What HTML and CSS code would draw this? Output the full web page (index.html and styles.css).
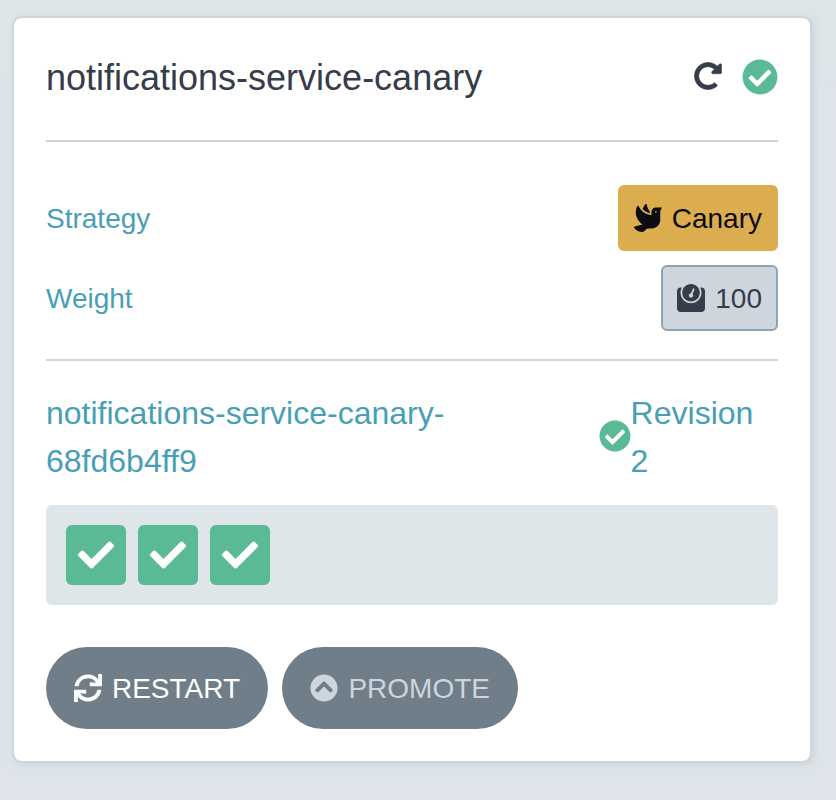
FILE: index.html
```html
<!DOCTYPE html>
<html lang="en">
<head>
<meta charset="utf-8">
<title>Rollout</title>
<link rel="stylesheet" href="styles.css">
</head>
<body>
<svg class="sprite" aria-hidden="true">
  <symbol id="check-circle" viewBox="0 0 512 512"><path d="M504 256c0 136.967-111.033 248-248 248S8 392.967 8 256 119.033 8 256 8s248 111.033 248 248zM227.314 387.314l184-184c6.248-6.248 6.248-16.379 0-22.627l-22.627-22.627c-6.248-6.249-16.379-6.249-22.628 0L216 308.118l-70.059-70.059c-6.248-6.248-16.379-6.248-22.628 0l-22.627 22.627c-6.248 6.248-6.248 16.379 0 22.627l104 104c6.249 6.249 16.379 6.249 22.628.001z"/></symbol>
  <symbol id="check" viewBox="0 0 512 512"><path d="M173.898 439.404l-166.4-166.4c-9.997-9.997-9.997-26.206 0-36.204l36.203-36.204c9.997-9.998 26.207-9.998 36.204 0L192 312.69 432.095 72.596c9.997-9.997 26.207-9.997 36.204 0l36.203 36.204c9.997 9.997 9.997 26.206 0 36.204l-294.4 294.401c-9.998 9.997-26.207 9.997-36.204-.001z"/></symbol>
</svg>
<article class="card">
  <header class="header">
    <h1 class="title">notifications-service-canary</h1>
    <svg class="icon redo" viewBox="0 0 512 512"><path d="M256.455 8c66.269.119 126.437 26.233 170.859 68.685l35.715-35.715C478.149 25.851 504 36.559 504 57.941V192c0 13.255-10.745 24-24 24H345.941c-21.382 0-32.09-25.851-16.971-40.971l41.75-41.75c-30.864-28.899-70.801-44.907-113.23-45.273-92.398-.798-170.283 73.977-169.484 169.442C88.764 348.009 162.184 424 256 424c41.127 0 79.997-14.678 110.629-41.556 4.743-4.161 11.906-3.908 16.368.553l39.662 39.662c4.872 4.872 4.631 12.815-.482 17.433C378.202 479.813 319.926 504 256 504 119.034 504 8.001 392.967 8 256.002 7.999 119.193 119.646 7.755 256.455 8z"/></svg>
    <svg class="status status-large"><use href="#check-circle"/></svg>
  </header>
  <section class="facts">
    <div class="fact">
      <span class="label">Strategy</span>
      <span class="tag tag-canary">
        <svg class="icon" viewBox="0 0 512 512"><path d="M288 167.2v-28.1c-28.2-36.3-47.1-79.3-54.1-125.2-2.1-13.5-19-18.8-27.8-8.3-21.1 24.9-37.7 54.1-48.9 86.5 34.2 38.3 80 64.6 130.8 75.1zM400 64c-44.2 0-80 35.9-80 80.1v59.4C215.6 197.3 127 133 87 41.8c-5.5-12.5-23.2-13.2-29-.9C41.4 76 32 115.2 32 156.6c0 70.8 34.1 136.9 85.1 185.9 13.2 12.7 26.1 23.2 38.9 32.8l-143.9 36C1.4 414-3.4 426.4 2.6 435.7 20 462.6 63 508.2 155.8 512c8 .3 16-2.6 22.1-7.9l65.2-56.1H320c88.4 0 160-71.5 160-159.9V128l32-64H400zm0 96.1c-8.8 0-16-7.2-16-16s7.2-16 16-16 16 7.2 16 16-7.2 16-16 16z"/></svg>
        <span class="text">Canary</span>
      </span>
    </div>
    <div class="fact">
      <span class="label">Weight</span>
      <span class="tag tag-weight">
        <svg class="icon" viewBox="0 0 512 512"><path d="M448 64h-25.98C438.44 92.33 448 125.01 448 160c0 105.87-86.13 192-192 192S64 265.87 64 160c0-34.99 9.56-67.67 25.98-96H64C28.71 64 0 92.71 0 128v320c0 35.29 28.71 64 64 64h384c35.29 0 64-28.71 64-64V128c0-35.29-28.71-64-64-64zM256 320c88.37 0 160-71.63 160-160S344.37 0 256 0 96 71.63 96 160s71.63 160 160 160zm-.3-151.94l33.58-78.36c3.5-8.17 12.94-11.92 21.03-8.41 8.12 3.48 11.88 12.89 8.41 21l-33.67 78.55C291.73 188 296 197.45 296 208c0 22.09-17.91 40-40 40s-40-17.91-40-40c0-21.98 17.76-39.77 39.7-39.94z"/></svg>
        <span class="text">100</span>
      </span>
    </div>
  </section>
  <section class="replicaset">
    <span class="rs-name">notifications-service-canary-<br>68fd6b4ff9</span>
    <svg class="status status-small"><use href="#check-circle"/></svg>
    <span class="revision">Revision<br>2</span>
  </section>
  <div class="pods">
    <span class="pod"><svg class="pod-icon"><use href="#check"/></svg></span>
    <span class="pod"><svg class="pod-icon"><use href="#check"/></svg></span>
    <span class="pod"><svg class="pod-icon"><use href="#check"/></svg></span>
  </div>
  <footer class="actions">
    <button class="button restart">
      <svg class="icon" viewBox="0 0 512 512"><path d="M440.65 12.57l4 82.77A247.16 247.16 0 0 0 255.83 8C134.73 8 33.91 94.92 12.29 209.82A12 12 0 0 0 24.09 224h49.05a12 12 0 0 0 11.67-9.26 175.91 175.91 0 0 1 317-56.94l-101.46-4.86a12 12 0 0 0-12.57 12v47.41a12 12 0 0 0 12 12H500a12 12 0 0 0 12-12V12a12 12 0 0 0-12-12h-47.37a12 12 0 0 0-11.98 12.57zM255.83 432a175.61 175.61 0 0 1-146-77.8l101.8 4.87a12 12 0 0 0 12.57-12v-47.4a12 12 0 0 0-12-12H12a12 12 0 0 0-12 12V500a12 12 0 0 0 12 12h47.35a12 12 0 0 0 12-12.6l-4.15-82.57A247.17 247.17 0 0 0 255.83 504c121.11 0 221.93-86.92 243.55-201.82a12 12 0 0 0-11.8-14.18h-49.05a12 12 0 0 0-11.67 9.26A175.86 175.86 0 0 1 255.83 432z"/></svg>
      <span class="text">RESTART</span>
    </button>
    <button class="button promote">
      <svg class="icon" viewBox="0 0 512 512"><path d="M8 256C8 119 119 8 256 8s248 111 248 248-111 248-248 248S8 393 8 256zm231-113.9L103.5 277.6c-9.4 9.4-9.4 24.6 0 33.9l17 17c9.4 9.4 24.6 9.4 33.9 0L256 226.9l101.6 101.6c9.4 9.4 24.6 9.4 33.9 0l17-17c9.4-9.4 9.4-24.6 0-33.9L273 142.1c-9.4-9.4-24.6-9.4-34 0z"/></svg>
      <span class="text">PROMOTE</span>
    </button>
  </footer>
</article>
</body>
</html>
```
FILE: styles.css
```css
* { box-sizing: border-box; }
body {
  margin: 0;
  padding: 16px 24px 0 12px;
  min-height: 800px;
  background: linear-gradient(#dee6e9 0, #dee6e9 66px, #dfe3ec 84px);
  font-family: "Liberation Sans", Arial, sans-serif;
  font-size: 28px;
  color: #363c4a;
}
svg { display: block; flex: none; fill: currentColor; }
.sprite { display: none; }
.card {
  height: 747px;
  padding: 0 32px;
  border: 2px solid #ced5dc;
  border-radius: 10px;
  background: #fff;
  box-shadow: 2px 2px 6px rgba(190, 200, 205, .6), 2px 2px 2px 9px #dee5e9;
}
.header {
  display: flex;
  align-items: center;
  height: 124px;
  padding-bottom: 5px;
  border-bottom: 2px solid #ced5dc;
}
.title { margin: 0 auto 0 0; padding-top: 2px; font-size: 36px; font-weight: 400; line-height: 44px; }
.icon { width: 28px; height: 28px; margin-bottom: 1px; }
.redo { stroke: currentColor; stroke-width: 10px; }
.status { width: 32px; height: 32px; color: #5aba96; }
.status-large { width: 36px; height: 36px; margin-left: 20px; }
.status-small { margin-bottom: 2px; }
.facts {
  display: flex;
  flex-direction: column;
  gap: 14px;
  height: 219px;
  padding-top: 43px;
  border-bottom: 2px solid #ced5dc;
}
.fact { display: flex; align-items: center; justify-content: space-between; height: 66px; }
.label { padding-top: 2px; color: #489fb5; }
.text { padding-top: 2px; }
.tag {
  display: flex;
  align-items: center;
  justify-content: space-between;
  height: 66px;
  padding: 0 16px;
  border-radius: 6px;
}
.tag-canary { width: 160px; background: #dbad4e; color: #0d0b14; }
.tag-weight { width: 117px; padding: 0 14px; border: 2px solid #8fa4b1; background: #ced5dc; }
.replicaset {
  display: flex;
  align-items: center;
  height: 144px;
  padding-top: 7px;
  font-size: 32px;
  line-height: 48px;
  color: #489fb5;
}
.rs-name { margin-right: auto; }
.revision { width: 147.4px; }
.pods {
  display: flex;
  gap: 12px;
  height: 100px;
  padding: 20px;
  border-radius: 6px;
  background: #dee6e9;
}
.pod {
  display: flex;
  align-items: center;
  justify-content: center;
  width: 60px;
  height: 60px;
  border-radius: 6px;
  background: #5aba96;
  color: #fff;
}
.pod-icon { width: 36px; height: 36px; }
.actions { display: flex; gap: 14px; margin-top: 42px; }
.button {
  display: flex;
  align-items: center;
  justify-content: space-between;
  height: 82px;
  padding: 0 28px;
  border: 0;
  border-radius: 41px;
  background: #6f7e88;
  color: #fff;
  font: inherit;
}
.restart { width: 222px; }
.promote { width: 236px; color: #ced5dc; }
```
